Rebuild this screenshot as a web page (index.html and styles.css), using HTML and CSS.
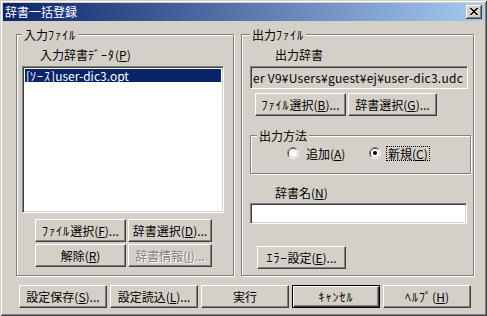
FILE: index.html
```html
<!DOCTYPE html>
<html lang="ja">
<head>
<meta charset="utf-8">
<title>辞書一括登録</title>
<link rel="stylesheet" href="styles.css">
</head>
<body>
<div class="window">
  <div class="titlebar">
    <span class="title">辞書一括登録</span>
    <span class="close-btn">
      <svg width="8" height="7" viewBox="0 0 8 7" shape-rendering="crispEdges"><path fill="#000" d="M0 0h2v1H0z M6 0h2v1H6z M1 1h2v1H1z M5 1h2v1H5z M2 2h4v1H2z M3 3h2v1H3z M2 4h4v1H2z M1 5h2v1H1z M5 5h2v1H5z M0 6h2v1H0z M6 6h2v1H6z"/></svg>
    </span>
  </div>
  <div class="content">
    <div class="groups">
      <fieldset class="group group-in">
        <legend>入力<span class="hw">ﾌｧｲﾙ</span></legend>
        <div class="label label-in">入力辞書<span class="hw">ﾃﾞｰﾀ</span>(<u>P</u>)</div>
        <div class="listbox">
          <div class="item selected">[<span class="hw">ｿｰｽ</span>]user-dic3.opt</div>
        </div>
        <div class="btn-grid">
          <span class="btn w91"><span class="hw">ﾌｧｲﾙ</span>選択(<u>F</u>)...</span>
          <span class="btn w84">辞書選択(<u>D</u>)...</span>
          <span class="btn w91">解除(<u>R</u>)</span>
          <span class="btn w84 disabled">辞書情報(<u>I</u>)...</span>
        </div>
      </fieldset>
      <fieldset class="group group-out">
        <legend>出力<span class="hw">ﾌｧｲﾙ</span></legend>
        <div class="label label-out">出力辞書</div>
        <div class="field readonly"><span class="path">er V9¥Users¥guest¥ej¥user-dic3.udc</span></div>
        <div class="btn-row">
          <span class="btn w91"><span class="hw">ﾌｧｲﾙ</span>選択(<u>B</u>)...</span>
          <span class="btn w89">辞書選択(<u>G</u>)...</span>
        </div>
        <fieldset class="group subgroup">
          <legend>出力方法</legend>
          <div class="radios">
            <label class="radio r1">
              <svg width="12" height="12" viewBox="0 0 12 12"><path d="M2.11 9.89A5.5 5.5 0 0 1 9.89 2.11" fill="none" stroke="#808080"/><path d="M9.89 2.11A5.5 5.5 0 0 1 2.11 9.89" fill="none" stroke="#fff"/><path d="M2.82 9.18A4.5 4.5 0 0 1 9.18 2.82" fill="none" stroke="#404040"/><path d="M9.18 2.82A4.5 4.5 0 0 1 2.82 9.18" fill="none" stroke="#D4D0C8"/><circle cx="6" cy="6" r="4" fill="#fff"/></svg>
              <span class="rtext">追加(<u>A</u>)</span>
            </label>
            <label class="radio r2">
              <svg width="12" height="12" viewBox="0 0 12 12"><path d="M2.11 9.89A5.5 5.5 0 0 1 9.89 2.11" fill="none" stroke="#808080"/><path d="M9.89 2.11A5.5 5.5 0 0 1 2.11 9.89" fill="none" stroke="#fff"/><path d="M2.82 9.18A4.5 4.5 0 0 1 9.18 2.82" fill="none" stroke="#404040"/><path d="M9.18 2.82A4.5 4.5 0 0 1 2.82 9.18" fill="none" stroke="#D4D0C8"/><circle cx="6" cy="6" r="4" fill="#fff"/><circle cx="6" cy="6" r="2" fill="#000"/></svg>
              <span class="rtext focus">新規(<u>C</u>)</span>
            </label>
          </div>
        </fieldset>
        <div class="label label-name">辞書名(<u>N</u>)</div>
        <div class="field name-field"></div>
        <span class="btn w89 err-btn"><span class="hw">ｴﾗｰ</span>設定(<u>E</u>)...</span>
      </fieldset>
    </div>
    <div class="bottom-row">
      <span class="btn w88">設定保存(<u>S</u>)...</span>
      <span class="btn w88">設定読込(<u>L</u>)...</span>
      <span class="btn w88">実行</span>
      <span class="btn w88 default"><span class="hw">ｷｬﾝｾﾙ</span></span>
      <span class="btn w88"><span class="hw">ﾍﾙﾌﾟ</span>(<u>H</u>)</span>
    </div>
  </div>
</div>
</body>
</html>
```

FILE: styles.css
```css
* { box-sizing: border-box; }
html, body { margin: 0; padding: 0; }
body {
  width: 487px;
  height: 316px;
  overflow: hidden;
  background: #D4D0C8;
  color: #000;
  font-family: "Noto Sans CJK JP", "Noto Sans CJK SC", sans-serif;
  font-size: 12px;
  line-height: 13px;
}
u { text-decoration: underline; text-underline-offset: 1px; }
.hw { letter-spacing: 1px; }

.window {
  width: 487px;
  height: 316px;
  padding: 3px;
  background: #D4D0C8;
  box-shadow: inset 1px 1px 0 #D4D0C8, inset -1px -1px 0 #404040, inset 2px 2px 0 #fff, inset -2px -2px 0 #808080;
  display: flex;
  flex-direction: column;
}

.titlebar {
  height: 18px;
  flex: none;
  display: flex;
  align-items: center;
  padding: 0 2px 0 2px;
  background: linear-gradient(to right, #0A246A 0%, #A6CAF0 100%);
}
.title { color: #fff; font-size: 12px; line-height: 14px; }
.close-btn {
  margin-left: auto;
  width: 16px;
  height: 14px;
  display: flex;
  align-items: center;
  justify-content: center;
  background: #D4D0C8;
  box-shadow: inset -1px -1px 0 #404040, inset 1px 1px 0 #fff, inset -2px -2px 0 #808080;
}
.close-btn svg { display: block; margin: 0 1px 1px 0; }

.content {
  flex: 1;
  display: flex;
  flex-direction: column;
  padding: 7px 10px 5px 13px;
}
.groups { display: flex; gap: 7px; height: 248px; flex: none; }

.group {
  margin: 0;
  padding: 0;
  min-width: 0;
  border: 1px solid #808080;
  box-shadow: inset 1px 1px 0 #fff, 1px 1px 0 #fff;
}
.group legend {
  padding: 0 2px;
  line-height: 13px;
  height: 13px;
  background: #D4D0C8;
}
.group-in { width: 218px; padding-left: 5px; }
.group-out { width: 233px; padding-left: 8px; }

.label { height: 13px; white-space: nowrap; }
.label-in { margin: 7px 0 0 18px; }
.label-out { margin: 7px 0 0 25px; }
.label-name { margin: 12px 0 0 25px; }

.listbox, .field {
  border: 1px solid;
  border-color: #808080 #fff #fff #808080;
  box-shadow: inset 1px 1px 0 #404040, inset -1px -1px 0 #D4D0C8;
  background: #fff;
}
.listbox {
  margin-top: 5px;
  width: 202px;
  height: 147px;
  padding: 2px;
}
.item { height: 13px; line-height: 13px; padding-left: 1px; white-space: nowrap; }
.item.selected { background: #0A246A; color: #fff; }

.btn {
  display: flex;
  align-items: center;
  justify-content: center;
  height: 23px;
  white-space: nowrap;
  background: #D4D0C8;
  border: 1px solid;
  border-color: #fff #404040 #404040 #fff;
  box-shadow: inset -1px -1px 0 #808080;
  padding-bottom: 1px;
}
.btn.default {
  border-color: #000;
  box-shadow: inset 1px 1px 0 #fff, inset -1px -1px 0 #404040, inset -2px -2px 0 #808080;
}
.btn.disabled { color: #808080; text-shadow: 1px 1px 0 #fff; }
.w84 { width: 84px; }
.w88 { width: 88px; }
.w89 { width: 89px; }
.w91 { width: 91px; }

.btn-grid {
  margin: 6px 0 0 13px;
  display: grid;
  grid-template-columns: 91px 84px;
  column-gap: 2px;
  row-gap: 2px;
}

.field { width: 218px; height: 23px; display: flex; align-items: center; padding: 0 2px; overflow: hidden; white-space: nowrap; }
.field.readonly { margin-top: 5px; background: #D4D0C8; }
.path { letter-spacing: 0.25px; }
.name-field { width: 217px; height: 21px; margin-top: 4px; }

.btn-row { display: flex; gap: 2px; margin: 4px 0 0 5px; }

.subgroup {
  width: 221px;
  height: 45px;
  margin-top: 13px;
  padding-left: 6px;
}
.radios { display: flex; margin: 4px 0 0 30px; height: 14px; align-items: center; }
.radio { display: flex; align-items: center; gap: 5px; }
.radio svg { display: block; flex: none; }
.r1 { width: 82px; }
.rtext { border: 1px dotted transparent; padding: 0 1px; line-height: 13px; }
.rtext.focus { border-color: #000; }

.err-btn { margin: 22px 0 0 7px; }

.bottom-row { display: flex; gap: 3px; margin: 9px 0 0 3px; }
```
